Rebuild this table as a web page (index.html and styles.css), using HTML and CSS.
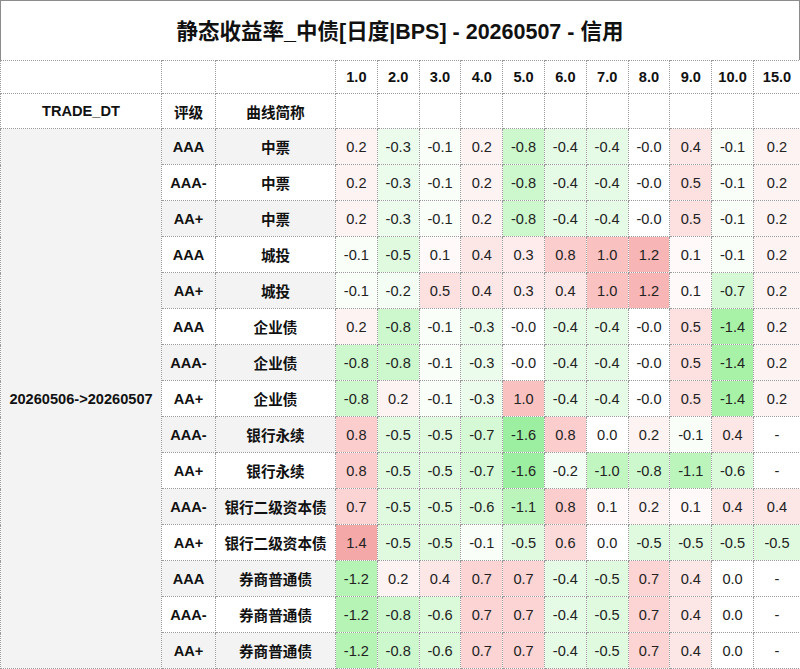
FILE: index.html
```html
<!DOCTYPE html>
<html lang="zh-CN">
<head>
<meta charset="utf-8">
<title>静态收益率_中债[日度|BPS] - 20260507 - 信用</title>
<link rel="stylesheet" href="styles.css">
</head>
<body>
<div class="title">静态收益率_中债[日度|BPS] - 20260507 - 信用</div>
<table class="grid">
<colgroup>
<col class="c-dt"><col class="c-rate"><col class="c-name">
<col class="c-v"><col class="c-v"><col class="c-v"><col class="c-v"><col class="c-v">
<col class="c-v"><col class="c-v"><col class="c-v"><col class="c-v"><col class="c-v">
<col class="c-last">
</colgroup>
<thead>
<tr class="h1"><th></th><th></th><th></th><th>1.0</th><th>2.0</th><th>3.0</th><th>4.0</th><th>5.0</th><th>6.0</th><th>7.0</th><th>8.0</th><th>9.0</th><th>10.0</th><th>15.0</th></tr>
<tr class="h2"><th>TRADE_DT</th><th>评级</th><th>曲线简称</th><th></th><th></th><th></th><th></th><th></th><th></th><th></th><th></th><th></th><th></th><th></th></tr>
</thead>
<tbody>
<tr class="odd"><th class="dt" rowspan="15">20260506-&gt;20260507</th><th>AAA</th><th>中票</th>
<td class="p2">0.2</td><td class="n3">-0.3</td><td class="n1">-0.1</td><td class="p2">0.2</td><td class="n8">-0.8</td><td class="n4">-0.4</td><td class="n4">-0.4</td><td>-0.0</td><td class="p4">0.4</td><td class="n1">-0.1</td><td class="p2">0.2</td></tr>
<tr class="even"><th>AAA-</th><th>中票</th>
<td class="p2">0.2</td><td class="n3">-0.3</td><td class="n1">-0.1</td><td class="p2">0.2</td><td class="n8">-0.8</td><td class="n4">-0.4</td><td class="n4">-0.4</td><td>-0.0</td><td class="p5">0.5</td><td class="n1">-0.1</td><td class="p2">0.2</td></tr>
<tr class="odd"><th>AA+</th><th>中票</th>
<td class="p2">0.2</td><td class="n3">-0.3</td><td class="n1">-0.1</td><td class="p2">0.2</td><td class="n8">-0.8</td><td class="n4">-0.4</td><td class="n4">-0.4</td><td>-0.0</td><td class="p5">0.5</td><td class="n1">-0.1</td><td class="p2">0.2</td></tr>
<tr class="even"><th>AAA</th><th>城投</th>
<td class="n1">-0.1</td><td class="n5">-0.5</td><td class="p1">0.1</td><td class="p4">0.4</td><td class="p3">0.3</td><td class="p8">0.8</td><td class="p10">1.0</td><td class="p12">1.2</td><td class="p1">0.1</td><td class="n1">-0.1</td><td class="p2">0.2</td></tr>
<tr class="odd"><th>AA+</th><th>城投</th>
<td class="n1">-0.1</td><td class="n2">-0.2</td><td class="p5">0.5</td><td class="p4">0.4</td><td class="p3">0.3</td><td class="p4">0.4</td><td class="p10">1.0</td><td class="p12">1.2</td><td class="p1">0.1</td><td class="n7">-0.7</td><td class="p2">0.2</td></tr>
<tr class="even"><th>AAA</th><th>企业债</th>
<td class="p2">0.2</td><td class="n8">-0.8</td><td class="n1">-0.1</td><td class="n3">-0.3</td><td>-0.0</td><td class="n4">-0.4</td><td class="n4">-0.4</td><td>-0.0</td><td class="p5">0.5</td><td class="n14">-1.4</td><td class="p2">0.2</td></tr>
<tr class="odd"><th>AAA-</th><th>企业债</th>
<td class="n8">-0.8</td><td class="n8">-0.8</td><td class="n1">-0.1</td><td class="n3">-0.3</td><td>-0.0</td><td class="n4">-0.4</td><td class="n4">-0.4</td><td>-0.0</td><td class="p5">0.5</td><td class="n14">-1.4</td><td class="p2">0.2</td></tr>
<tr class="even"><th>AA+</th><th>企业债</th>
<td class="n8">-0.8</td><td class="p2">0.2</td><td class="n1">-0.1</td><td class="n3">-0.3</td><td class="p10">1.0</td><td class="n4">-0.4</td><td class="n4">-0.4</td><td>-0.0</td><td class="p5">0.5</td><td class="n14">-1.4</td><td class="p2">0.2</td></tr>
<tr class="odd"><th>AAA-</th><th>银行永续</th>
<td class="p8">0.8</td><td class="n5">-0.5</td><td class="n5">-0.5</td><td class="n7">-0.7</td><td class="n16">-1.6</td><td class="p8">0.8</td><td>0.0</td><td class="p2">0.2</td><td class="n1">-0.1</td><td class="p4">0.4</td><td>-</td></tr>
<tr class="even"><th>AA+</th><th>银行永续</th>
<td class="p8">0.8</td><td class="n5">-0.5</td><td class="n5">-0.5</td><td class="n7">-0.7</td><td class="n16">-1.6</td><td class="n2">-0.2</td><td class="n10">-1.0</td><td class="n8">-0.8</td><td class="n11">-1.1</td><td class="n6">-0.6</td><td>-</td></tr>
<tr class="odd"><th>AAA-</th><th>银行二级资本债</th>
<td class="p7">0.7</td><td class="n5">-0.5</td><td class="n5">-0.5</td><td class="n6">-0.6</td><td class="n11">-1.1</td><td class="p8">0.8</td><td class="p1">0.1</td><td class="p2">0.2</td><td class="p1">0.1</td><td class="p4">0.4</td><td class="p4">0.4</td></tr>
<tr class="even"><th>AA+</th><th>银行二级资本债</th>
<td class="p14">1.4</td><td class="n5">-0.5</td><td class="n5">-0.5</td><td class="n1">-0.1</td><td class="n5">-0.5</td><td class="p6">0.6</td><td>0.0</td><td class="n5">-0.5</td><td class="n5">-0.5</td><td class="n5">-0.5</td><td class="n5">-0.5</td></tr>
<tr class="odd"><th>AAA</th><th>券商普通债</th>
<td class="n12">-1.2</td><td class="p2">0.2</td><td class="p4">0.4</td><td class="p7">0.7</td><td class="p7">0.7</td><td class="n4">-0.4</td><td class="n5">-0.5</td><td class="p7">0.7</td><td class="p4">0.4</td><td>0.0</td><td>-</td></tr>
<tr class="even"><th>AAA-</th><th>券商普通债</th>
<td class="n12">-1.2</td><td class="n8">-0.8</td><td class="n6">-0.6</td><td class="p7">0.7</td><td class="p7">0.7</td><td class="n4">-0.4</td><td class="n5">-0.5</td><td class="p7">0.7</td><td class="p4">0.4</td><td>0.0</td><td>-</td></tr>
<tr class="odd"><th>AA+</th><th>券商普通债</th>
<td class="n12">-1.2</td><td class="n8">-0.8</td><td class="n6">-0.6</td><td class="p7">0.7</td><td class="p7">0.7</td><td class="n4">-0.4</td><td class="n5">-0.5</td><td class="p7">0.7</td><td class="p4">0.4</td><td>0.0</td><td>-</td></tr>
</tbody>
</table>
</body>
</html>
```
FILE: styles.css
```css
html, body {
  margin: 0;
  padding: 0;
  background: #ffffff;
}
body {
  width: 800px;
  font-family: "Liberation Sans", Arial, "Noto Sans CJK SC", sans-serif;
  color: #1a1a1a;
  overflow: hidden;
}
.title {
  box-sizing: border-box;
  height: 60px;
  border: 1px solid #8c8c8c;
  border-bottom: none;
  display: flex;
  align-items: center;
  justify-content: center;
  font-size: 21.5px;
  font-weight: bold;
  color: #111;
  padding-bottom: 2px;
}
.grid {
  width: 800px;
  border-collapse: collapse;
  table-layout: fixed;
  font-size: 14.6px;
}
.c-dt { width: 161px; }
.c-rate { width: 54px; }
.c-name { width: 120px; }
.c-v { width: 41.8px; }
.c-last { width: 47px; }
.grid th, .grid td {
  border: 1px dotted #9a9a9a;
  padding: 0;
  text-align: center;
  vertical-align: middle;
  white-space: nowrap;
  overflow: hidden;
}
.grid th {
  font-weight: bold;
  color: #111;
}
.grid td {
  color: #222;
}
.h1 { height: 33px; }
.h2 { height: 35px; }
.grid tbody tr { height: 36px; }
.grid tbody tr.odd th { background: #f3f3f3; }
.grid tbody tr.even th { background: #ffffff; }
.grid tbody th.dt { background: #f3f3f3; }

/* positive values: red scale */
.p1 { background: #fff9f9; }
.p2 { background: #fef3f3; }
.p3 { background: #feecec; }
.p4 { background: #fde6e6; }
.p5 { background: #fde0e0; }
.p6 { background: #fcdada; }
.p7 { background: #fcd4d4; }
.p8 { background: #fbcdcd; }
.p10 { background: #fac1c1; }
.p12 { background: #f7b5b5; }
.p14 { background: #f5a8a8; }

/* negative values: green scale */
.n1 { background: #f9fef9; }
.n2 { background: #f3fdf3; }
.n3 { background: #ecfcec; }
.n4 { background: #e6fbe6; }
.n5 { background: #e0fae0; }
.n6 { background: #dafada; }
.n7 { background: #d4f9d4; }
.n8 { background: #cdf8cd; }
.n10 { background: #c1f6c1; }
.n11 { background: #bbf5bb; }
.n12 { background: #b5f4b5; }
.n14 { background: #a8f2a8; }
.n16 { background: #9cefa0; }
```
